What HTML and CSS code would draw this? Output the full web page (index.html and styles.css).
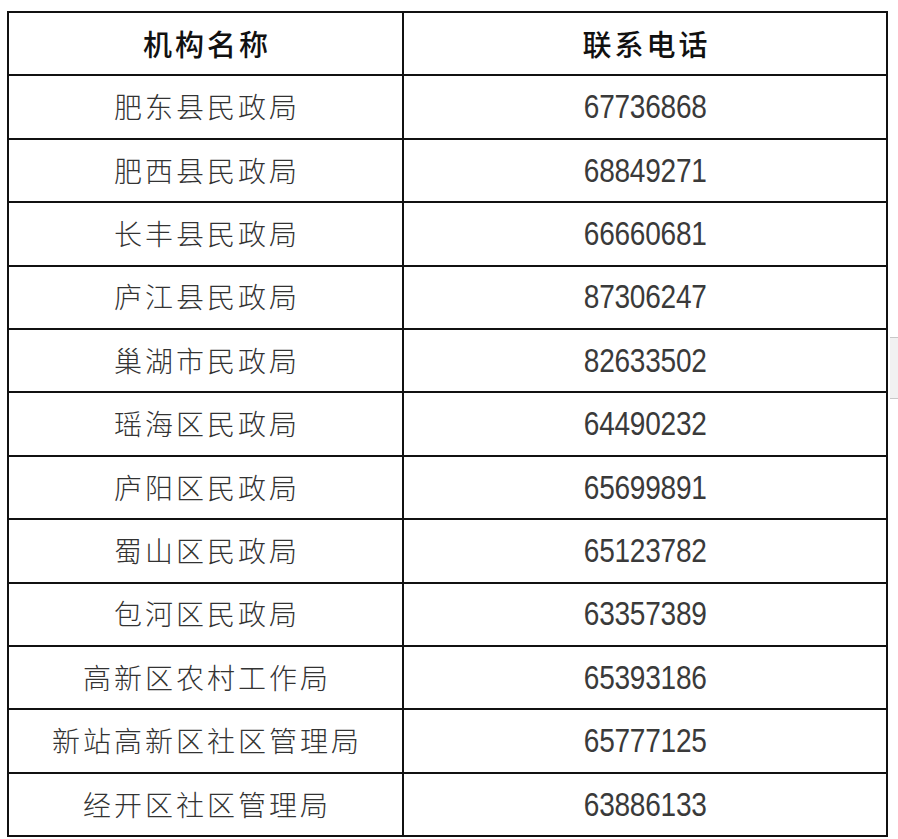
FILE: index.html
```html
<!DOCTYPE html>
<html lang="zh-CN">
<head>
<meta charset="utf-8">
<title>机构联系电话</title>
<link rel="stylesheet" href="styles.css">
</head>
<body>
<div class="page">
  <table class="contacts">
    <thead>
      <tr><th class="name">机构名称</th><th class="phone">联系电话</th></tr>
    </thead>
    <tbody>
      <tr><td class="name">肥东县民政局</td><td class="phone"><span class="num">67736868</span></td></tr>
      <tr><td class="name">肥西县民政局</td><td class="phone"><span class="num">68849271</span></td></tr>
      <tr><td class="name">长丰县民政局</td><td class="phone"><span class="num">66660681</span></td></tr>
      <tr><td class="name">庐江县民政局</td><td class="phone"><span class="num">87306247</span></td></tr>
      <tr><td class="name">巢湖市民政局</td><td class="phone"><span class="num">82633502</span></td></tr>
      <tr><td class="name">瑶海区民政局</td><td class="phone"><span class="num">64490232</span></td></tr>
      <tr><td class="name">庐阳区民政局</td><td class="phone"><span class="num">65699891</span></td></tr>
      <tr><td class="name">蜀山区民政局</td><td class="phone"><span class="num">65123782</span></td></tr>
      <tr><td class="name">包河区民政局</td><td class="phone"><span class="num">63357389</span></td></tr>
      <tr><td class="name">高新区农村工作局</td><td class="phone"><span class="num">65393186</span></td></tr>
      <tr><td class="name">新站高新区社区管理局</td><td class="phone"><span class="num">65777125</span></td></tr>
      <tr><td class="name">经开区社区管理局</td><td class="phone"><span class="num">63886133</span></td></tr>
    </tbody>
  </table>
  <div class="edge-mark"></div>
</div>
</body>
</html>
```

FILE: styles.css
```css
html, body {
  margin: 0;
  padding: 0;
  background: #ffffff;
}

.page {
  position: relative;
  width: 898px;
  height: 839px;
  padding: 11px 0 0 7px;
  box-sizing: border-box;
}

.contacts {
  border-collapse: collapse;
  width: 881px;
  table-layout: fixed;
}

.contacts th,
.contacts td {
  border: 2px solid #111111;
  height: 61.4px;
  padding: 0;
  text-align: center;
  vertical-align: middle;
  line-height: 1.2;
}

.contacts .name {
  width: 393px;
}

.contacts th {
  font-family: "Noto Sans CJK SC", "Noto Sans", sans-serif;
  font-size: 29px;
  font-weight: 500;
  letter-spacing: 3px;
  text-indent: 3px;
  color: #111111;
}

.contacts td.name {
  font-family: "Noto Sans CJK SC", "Noto Sans", sans-serif;
  font-size: 28px;
  font-weight: 300;
  letter-spacing: 3px;
  text-indent: 3px;
  color: #333333;
}

.contacts td.phone {
  font-family: "Liberation Sans", Arial, sans-serif;
  font-size: 33px;
  color: #3a3a3a;
}

.num {
  display: inline-block;
  transform: scaleX(0.85);
  letter-spacing: -0.3px;
}

.edge-mark {
  position: absolute;
  left: 890px;
  top: 337px;
  width: 8px;
  height: 60px;
  background: #f1f1f1;
  border-top: 1px solid #c8c8c8;
  border-bottom: 1px solid #c8c8c8;
}
```
